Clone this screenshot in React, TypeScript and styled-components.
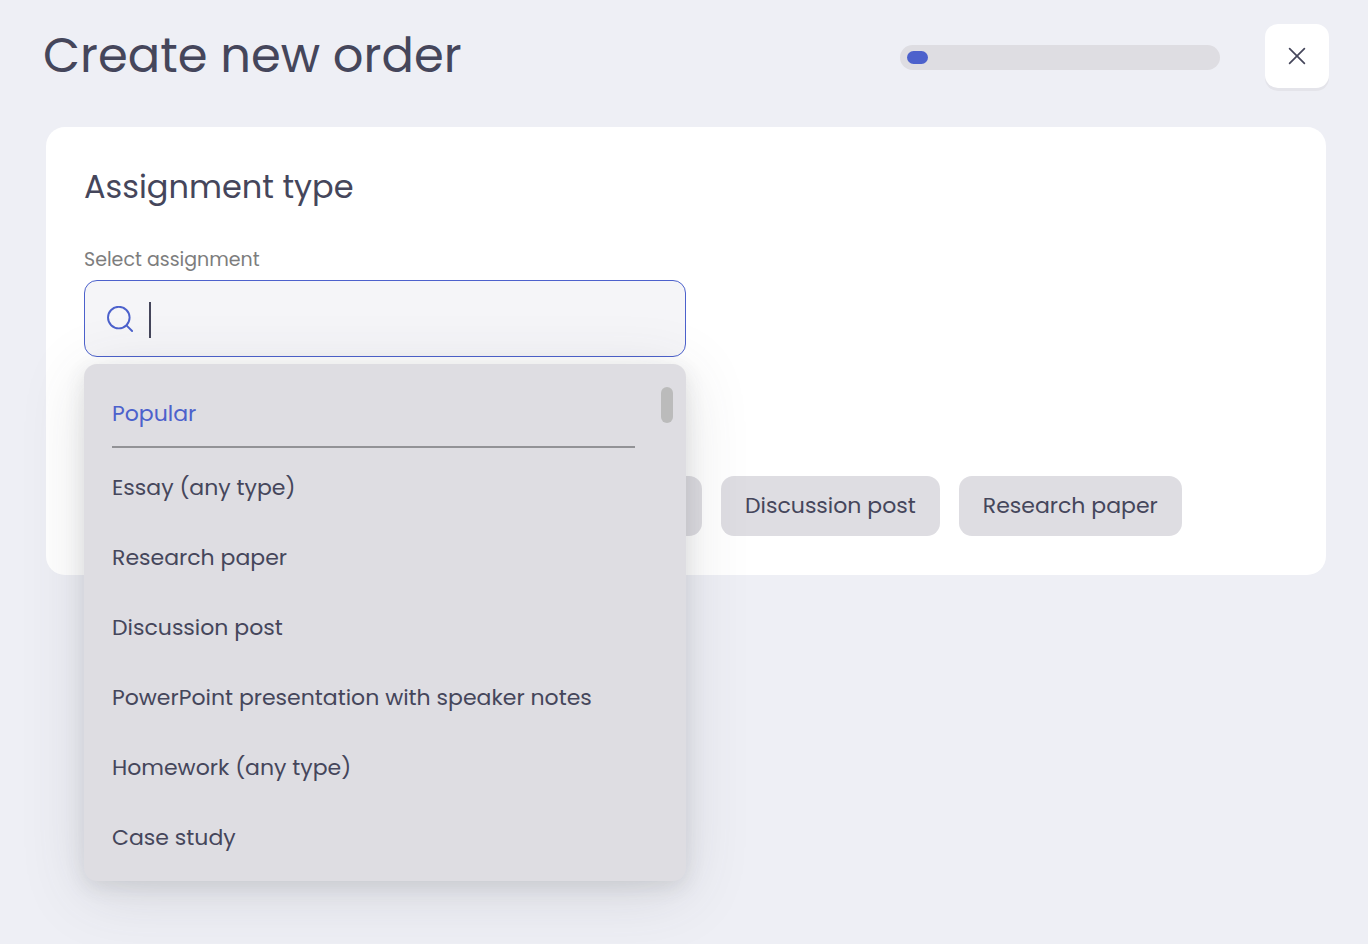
import React from "react";
import styled, { createGlobalStyle } from "styled-components";

const ink = "#45465b";
const accent = "#4c61cc";
const surface = "#dedde2";

const GlobalStyle = createGlobalStyle`
  *, *::before, *::after { box-sizing: border-box; }
  body {
    margin: 0;
    min-height: 100vh;
    background: #eeeff5;
    color: ${ink};
    font-family: Poppins, Inter, sans-serif;
    font-size: 22px;
    line-height: 36px;
  }
  button, input { font: inherit; color: inherit; }
`;

const Page = styled.div`
  padding: 24px 42px 64px 46px;
`;

const Header = styled.header`
  display: flex;
  align-items: center;
  gap: 45px;
  margin: 0 -3px;
`;

const PageTitle = styled.h1`
  flex: 1;
  margin: 0;
  font-size: 48px;
  line-height: 64px;
  font-weight: 400;
`;

const Progress = styled.div`
  width: 320px;
  height: 25px;
  margin-top: 2px;
  padding: 6px 7px;
  border-radius: 13px;
  background: ${surface};
`;

const ProgressFill = styled.div`
  height: 13px;
  border-radius: 7px;
  background: ${accent};
`;

const CloseButton = styled.button`
  display: grid;
  place-items: center;
  width: 64px;
  height: 64px;
  padding: 0;
  border: 0;
  border-radius: 13px;
  background: #fff;
  box-shadow: 0 3px 0 #e4e4ea;
  cursor: pointer;
`;

const Card = styled.main`
  margin-top: 39px;
  padding: 36px 38px 39px;
  border-radius: 19px;
  background: #fff;
`;

const CardTitle = styled.h2`
  margin: 0;
  font-size: 32px;
  line-height: 48px;
  font-weight: 400;
`;

const Field = styled.div`
  position: relative;
  width: 50%;
  max-width: 602px;
  min-width: 480px;
  margin-top: 35px;
`;

const FieldLabel = styled.label`
  display: block;
  font-size: 19px;
  line-height: 28px;
  color: #7d7d7d;
`;

const SearchBox = styled.div`
  display: flex;
  align-items: center;
  height: 77px;
  margin-top: 6px;
  padding: 2px 22px 0;
  border: 1px solid ${accent};
  border-radius: 13px;
  background: #f5f5f8;
`;

const Caret = styled.span`
  width: 2px;
  height: 36px;
  margin-left: 15px;
  background: ${ink};
`;

const SearchInput = styled.input`
  flex: 1;
  min-width: 0;
  padding: 0;
  border: 0;
  outline: 0;
  background: transparent;
  caret-color: transparent;
`;

const Menu = styled.div`
  position: absolute;
  z-index: 1;
  top: calc(100% + 7px);
  left: 0;
  right: 0;
  display: flex;
  justify-content: space-between;
  padding: 23px 13px 8px 28px;
  border-radius: 13px;
  background: ${surface};
  box-shadow: 0 12px 64px rgba(66, 70, 74, 0.15), 0 6px 20px rgba(66, 70, 74, 0.12);
`;

const Options = styled.div`
  flex: 1;
  margin-right: 26px;
`;

const GroupName = styled.div`
  padding: 9px 0 14px;
  border-bottom: 2px solid #929296;
  color: ${accent};
`;

const Option = styled.button`
  display: block;
  width: 100%;
  height: 70px;
  padding: 0;
  border: 0;
  background: transparent;
  text-align: left;
  white-space: nowrap;
  cursor: pointer;
`;

const OptionList = styled.div`
  padding-top: 5px;
`;

const ScrollThumb = styled.div`
  width: 12px;
  height: 36px;
  border-radius: 6px;
  background: #bbbbbb;
`;

const Chips = styled.div`
  display: flex;
  gap: 19px;
  margin-top: 119px;
`;

const Chip = styled.button<{ $wide?: boolean }>`
  flex: ${(p) => (p.$wide ? "0 0 618px" : "none")};
  height: 60px;
  padding: 0 24px;
  border: 0;
  border-radius: 13px;
  background: ${surface};
  white-space: nowrap;
  cursor: pointer;
`;

const options = [
  "Essay (any type)",
  "Research paper",
  "Discussion post",
  "PowerPoint presentation with speaker notes",
  "Homework (any type)",
  "Case study",
];

export default function App() {
  const progress = 7;
  return (
    <>
      <GlobalStyle />
      <Page>
        <Header>
          <PageTitle>Create new order</PageTitle>
          <Progress role="progressbar" aria-label="Order progress" aria-valuenow={progress}>
            <ProgressFill style={{ width: `${progress}%` }} />
          </Progress>
          <CloseButton type="button" aria-label="Close">
            <svg width="18" height="18" viewBox="0 0 18 18" fill="none" stroke={ink} strokeWidth="1.7" strokeLinecap="round">
              <path d="M1.6 1.6 16.4 16.4M16.4 1.6 1.6 16.4" />
            </svg>
          </CloseButton>
        </Header>
        <Card>
          <CardTitle>Assignment type</CardTitle>
          <Field>
            <FieldLabel htmlFor="assignment">Select assignment</FieldLabel>
            <SearchBox>
              <svg width="27" height="27" viewBox="0 0 27 27" fill="none" stroke={accent} strokeWidth="1.9" strokeLinecap="round">
                <circle cx="11.8" cy="11.6" r="10.8" />
                <path d="m19.7 19.6 5.4 5.4" />
              </svg>
              <Caret />
              <SearchInput id="assignment" type="text" autoComplete="off" />
            </SearchBox>
            <Menu>
              <Options role="listbox" aria-label="Assignments">
                <GroupName>Popular</GroupName>
                <OptionList>
                  {options.map((name) => (
                    <Option key={name} type="button" role="option" aria-selected={false}>
                      {name}
                    </Option>
                  ))}
                </OptionList>
              </Options>
              <ScrollThumb />
            </Menu>
          </Field>
          <Chips>
            <Chip type="button" $wide>Essay (any type)</Chip>
            <Chip type="button">Discussion post</Chip>
            <Chip type="button">Research paper</Chip>
          </Chips>
        </Card>
      </Page>
    </>
  );
}
